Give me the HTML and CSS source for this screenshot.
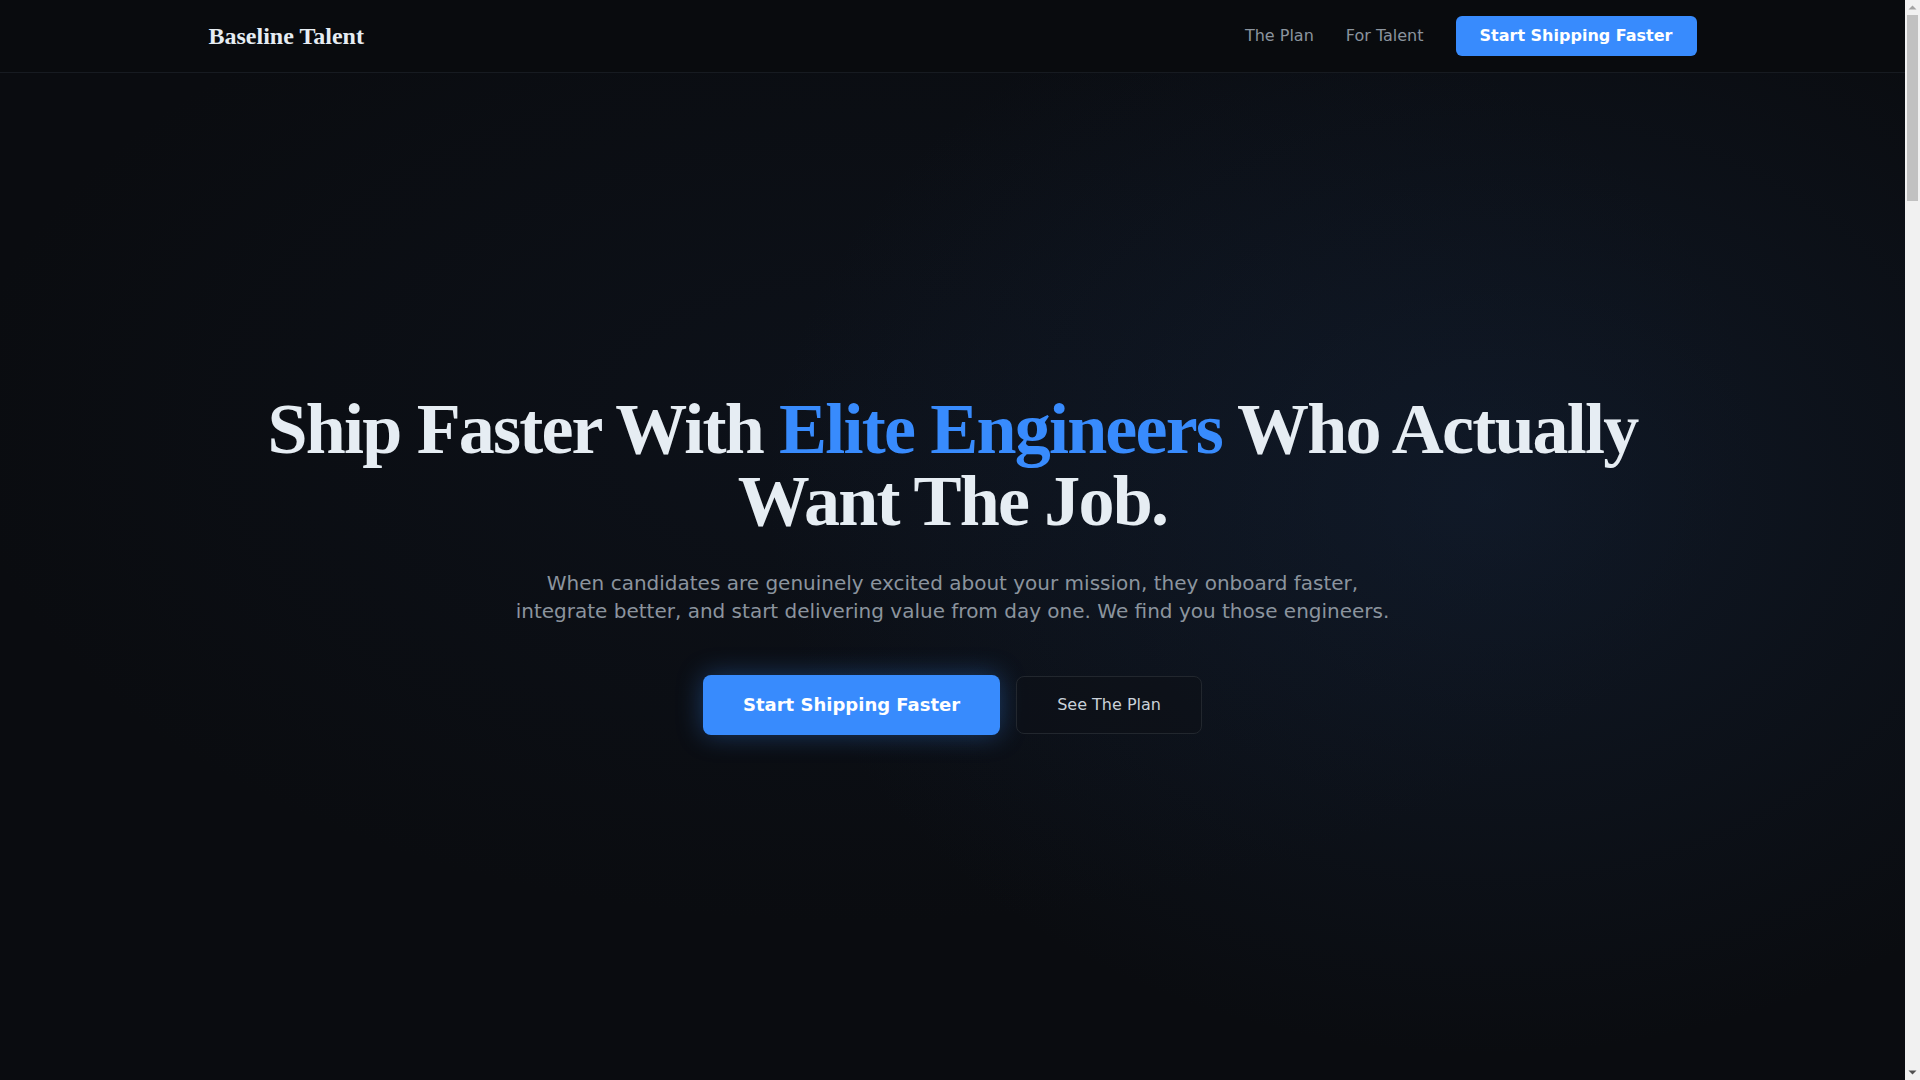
FILE: index.html
```html
<!DOCTYPE html>
<html lang="en">
<head>
<meta charset="utf-8">
<title>Baseline Talent</title>
<link rel="stylesheet" href="styles.css">
</head>
<body>
<header class="nav">
  <div class="container nav-inner">
    <a class="logo" href="#">Baseline Talent</a>
    <nav class="nav-links">
      <a class="nav-link" href="#plan">The Plan</a>
      <a class="nav-link" href="#talent">For Talent</a>
      <a class="btn btn-nav" href="#start">Start Shipping Faster</a>
    </nav>
  </div>
</header>
<main>
  <section class="hero">
    <div class="container hero-inner">
      <h1 class="hero-title">Ship Faster With <span class="accent">Elite Engineers</span> Who Actually Want The Job.</h1>
      <p class="hero-text">When candidates are genuinely excited about your mission, they onboard faster, integrate better, and start delivering value from day one. We find you those engineers.</p>
      <div class="hero-actions">
        <a class="btn btn-primary" href="#start">Start Shipping Faster</a>
        <a class="btn btn-secondary" href="#plan">See The Plan</a>
      </div>
    </div>
  </section>
  <section class="section" id="plan"></section>
  <section class="section" id="talent"></section>
</main>
<div class="scrollbar" aria-hidden="true">
  <svg class="sb-arrow" width="15" height="15" viewBox="0 0 15 15"><polygon points="3.5,9.5 11.5,9.5 7.5,5.5" fill="#a3a3a3"/></svg>
  <div class="sb-track"><div class="sb-thumb"></div></div>
  <svg class="sb-arrow" width="15" height="15" viewBox="0 0 15 15"><polygon points="3.5,5.5 11.5,5.5 7.5,9.5" fill="#505050"/></svg>
</div>
</body>
</html>
```
FILE: styles.css
```css
* { box-sizing: border-box; }
html, body { margin: 0; padding: 0; }
html { background: #f1f1f1; }
body {
  margin-right: 15px;
  background: #0a0c10;
  color: #e6edf3;
  font-family: "DejaVu Sans", sans-serif;
}
a { text-decoration: none; color: inherit; }

.scrollbar {
  position: fixed;
  top: 0;
  right: 0;
  width: 15px;
  height: 100vh;
  background: #f1f1f1;
  display: flex;
  flex-direction: column;
}
.sb-arrow { display: block; flex: none; }
.sb-track {
  flex: 1;
  padding: 0 2px;
}
.sb-thumb {
  height: 186px;
  background: #c1c1c1;
}

.container {
  max-width: 1536px;
  margin: 0 auto;
  padding: 0 24px;
}

.nav {
  background: #090b0e;
  border-bottom: 1px solid #171b21;
}
.nav-inner {
  display: flex;
  align-items: center;
  justify-content: space-between;
  height: 72px;
}
.logo {
  font-family: "Liberation Serif", serif;
  font-weight: 700;
  font-size: 24px;
  line-height: 32px;
  color: #e6edf3;
}
.nav-links {
  display: flex;
  align-items: center;
  gap: 32px;
}
.nav-link {
  font-size: 16px;
  line-height: 24px;
  color: #8b949e;
}

.btn {
  display: inline-block;
  font-family: "DejaVu Sans", sans-serif;
  border-radius: 8px;
  white-space: nowrap;
}
.btn-nav {
  background: #388bfd;
  color: #ffffff;
  font-weight: 700;
  font-size: 16px;
  line-height: 24px;
  padding: 8px 24px;
  border-radius: 6px;
}

.hero {
  min-height: calc(100vh - 73px);
  padding-top: 320px;
  background:
    radial-gradient(ellipse 720px 560px at 78% 42%, rgba(28, 52, 88, 0.30), rgba(28, 52, 88, 0) 100%),
    radial-gradient(ellipse 900px 500px at 45% 35%, rgba(22, 36, 60, 0.22), rgba(22, 36, 60, 0) 100%),
    #0a0c10;
}
.hero-inner {
  display: flex;
  flex-direction: column;
  align-items: center;
  text-align: center;
}
.hero-title {
  margin: 0;
  font-family: "Liberation Serif", serif;
  font-weight: 700;
  font-size: 72px;
  line-height: 72px;
  letter-spacing: -0.025em;
  color: #e6edf3;
}
.accent { color: #388bfd; }
.hero-text {
  margin: 32px 0 0;
  max-width: 896px;
  font-size: 20px;
  line-height: 28px;
  color: #8b949e;
}
.hero-actions {
  margin-top: 50px;
  display: flex;
  align-items: center;
  gap: 16px;
}
.btn-primary {
  background: #388bfd;
  color: #ffffff;
  font-weight: 700;
  font-size: 18px;
  line-height: 28px;
  padding: 16px 40px;
  box-shadow: 0 0 26px rgba(56, 139, 253, 0.35);
}
.btn-secondary {
  color: #c9d1d9;
  font-size: 16px;
  line-height: 24px;
  padding: 16px 40px;
  border: 1px solid #22272e;
  background: rgba(13, 17, 23, 0.6);
}

.section {
  min-height: 2500px;
}
```
